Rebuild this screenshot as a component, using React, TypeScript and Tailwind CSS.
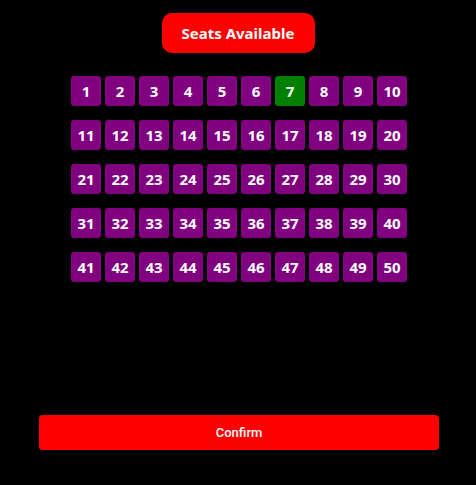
import * as React from "react"

const seats = Array.from({ length: 50 }, (_, i) => i + 1)

export default function App() {
  const [selected, setSelected] = React.useState<number>(7)

  return (
    <div className="min-h-screen w-full bg-black flex flex-col items-center" style={{ fontFamily: "'Noto Sans', 'Open Sans', sans-serif" }}>
      <div className="mt-[13px] h-[40px] w-[153px] rounded-[10px] bg-[#ff0000] text-white font-bold text-[15px] flex items-center justify-center">
        Seats Available
      </div>
      <div className="mt-[23px] grid grid-cols-10 gap-x-[4px] gap-y-[14px] ml-[2px]">
        {seats.map((n) => (
          <button
            key={n}
            onClick={() => setSelected(n)}
            className={`h-[30px] w-[30px] rounded-[3px] text-white font-bold text-[15px] flex items-center justify-center ${n === selected ? "bg-[#008000]" : "bg-[#800080]"}`}
          >
            {n}
          </button>
        ))}
      </div>
      <button
        className="mt-[133px] ml-[2px] h-[35px] w-[400px] rounded-[4px] bg-[#ff0000] text-white text-[13px] font-medium flex items-center justify-center"
        style={{ fontFamily: "Roboto, 'Liberation Sans', sans-serif" }}
      >
        Confirm
      </button>
    </div>
  )
}
